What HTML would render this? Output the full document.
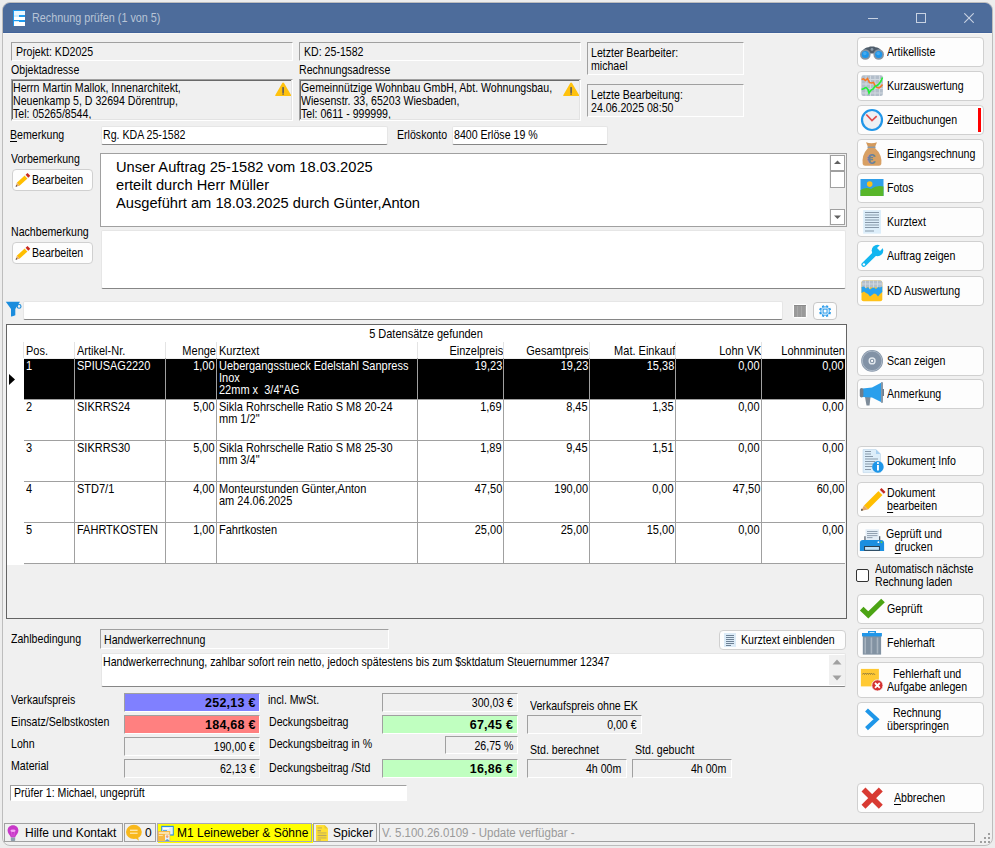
<!DOCTYPE html><html><head><meta charset="utf-8"><style>
html,body{margin:0;padding:0;width:995px;height:848px;overflow:hidden;background:#EDEDED;position:relative;font-family:"Liberation Sans",sans-serif}
u{text-decoration:none;position:relative}u::after{content:'';position:absolute;left:0;right:0;bottom:0.5px;height:1px;background:currentColor}
</style></head><body>
<div style="position:absolute;left:2px;top:2px;width:991px;height:844px;box-sizing:border-box;background:#F0F0F0;border:1px solid #BDBDBD;border-radius:8px;"></div>
<div style="position:absolute;left:3px;top:3px;width:989px;height:30px;box-sizing:border-box;background:#4D6C9B;border-top:1px solid #44659A;border-bottom:1px solid #42639A;border-radius:7px 7px 0 0;"></div>
<div style="position:absolute;left:3px;top:33px;width:989px;height:1px;box-sizing:border-box;background:#F8F7F4;"></div>
<div style="position:absolute;left:32px;transform-origin:0 0;top:11px;font:normal 11.88px/14px 'Liberation Sans';color:#B8C4D6;white-space:pre;transform:scaleX(0.9091);">Rechnung prüfen (1 von 5)</div>
<svg style="position:absolute;left:13px;top:10px" width="12" height="16" viewBox="0 0 12 16"><rect x="0" y="0" width="13" height="17" fill="#1E9BF0"/><rect x="1" y="1" width="11" height="4" fill="#E8F6FF"/><rect x="1" y="5" width="5" height="2" fill="#CFEAFB"/><rect x="1" y="7" width="11" height="3" fill="#FFFFFF"/><rect x="1" y="11" width="5" height="1" fill="#CFEAFB"/><rect x="1" y="12" width="11" height="4" fill="#FFFFFF"/></svg>
<div style="position:absolute;left:868px;top:18px;width:10px;height:1px;box-sizing:border-box;background:#C8D2E2;"></div>
<div style="position:absolute;left:916px;top:13px;width:10px;height:10px;box-sizing:border-box;border:1px solid #C8D2E2;"></div>
<svg style="position:absolute;left:964px;top:13px" width="10" height="10" viewBox="0 0 10 10"><path d="M0.3 0.3L9.7 9.7M9.7 0.3L0.3 9.7" stroke="#C8D2E2" stroke-width="1.1"/></svg>
<div style="position:absolute;left:11px;top:42px;width:282px;height:19px;box-sizing:border-box;background:#F0F0F0;border-style:solid;border-width:1px;border-color:#A0A0A0 #FFFFFF #FFFFFF #A0A0A0;"></div>
<div style="position:absolute;left:16px;transform-origin:0 0;top:45px;font:normal 12.08px/14px 'Liberation Sans';color:#000;white-space:pre;transform:scaleX(0.8772);">Projekt: KD2025</div>
<div style="position:absolute;left:11px;transform-origin:0 0;top:63px;font:normal 12.08px/14px 'Liberation Sans';color:#000;white-space:pre;transform:scaleX(0.8772);">Objektadresse</div>
<div style="position:absolute;left:11px;top:79px;width:282px;height:42px;box-sizing:border-box;background:#F0F0F0;border-style:solid;border-width:1px;border-color:#A0A0A0 #FFFFFF #FFFFFF #A0A0A0;"></div>
<div style="position:absolute;left:12px;top:80px;width:280px;height:40px;box-sizing:border-box;border-style:solid;border-width:1px 0 0 1px;border-color:#696969;"></div>
<div style="position:absolute;left:13px;transform-origin:0 0;top:82px;font:normal 12.08px/13px 'Liberation Sans';color:#000;white-space:pre;transform:scaleX(0.8772);height:38px;overflow:hidden;">Herrn Martin Mallok, Innenarchitekt,
Neuenkamp 5, D 32694 Dörentrup,
Tel: 05265/8544,</div>
<div style="position:absolute;left:299px;top:42px;width:282px;height:19px;box-sizing:border-box;background:#F0F0F0;border-style:solid;border-width:1px;border-color:#A0A0A0 #FFFFFF #FFFFFF #A0A0A0;"></div>
<div style="position:absolute;left:304px;transform-origin:0 0;top:45px;font:normal 12.08px/14px 'Liberation Sans';color:#000;white-space:pre;transform:scaleX(0.8772);">KD: 25-1582</div>
<div style="position:absolute;left:299px;transform-origin:0 0;top:63px;font:normal 12.08px/14px 'Liberation Sans';color:#000;white-space:pre;transform:scaleX(0.8772);">Rechnungsadresse</div>
<div style="position:absolute;left:299px;top:79px;width:282px;height:42px;box-sizing:border-box;background:#F0F0F0;border-style:solid;border-width:1px;border-color:#A0A0A0 #FFFFFF #FFFFFF #A0A0A0;"></div>
<div style="position:absolute;left:300px;top:80px;width:280px;height:40px;box-sizing:border-box;border-style:solid;border-width:1px 0 0 1px;border-color:#696969;"></div>
<div style="position:absolute;left:301px;transform-origin:0 0;top:82px;font:normal 12.08px/13px 'Liberation Sans';color:#000;white-space:pre;transform:scaleX(0.8772);height:38px;overflow:hidden;">Gemeinnützige Wohnbau GmbH, Abt. Wohnungsbau,
Wiesenstr. 33, 65203 Wiesbaden,
Tel: 0611 - 999999,</div>
<svg style="position:absolute;left:275px;top:82px" width="17" height="14" viewBox="0 0 17 14"><path d="M8.1 0.4Q8.6 0.4 9 1L16.2 13.2Q16.4 14 15.6 14H0.7Q-0.1 14 0.2 13.2L7.3 1Q7.6 0.4 8.1 0.4Z" fill="#FFC20E"/><rect x="7.3" y="5" width="1.6" height="6" rx="0.5" fill="#5A5A66"/><rect x="7.3" y="11.4" width="1.6" height="1.3" fill="#5A5A66"/></svg>
<svg style="position:absolute;left:563px;top:82px" width="17" height="14" viewBox="0 0 17 14"><path d="M8.1 0.4Q8.6 0.4 9 1L16.2 13.2Q16.4 14 15.6 14H0.7Q-0.1 14 0.2 13.2L7.3 1Q7.6 0.4 8.1 0.4Z" fill="#FFC20E"/><rect x="7.3" y="5" width="1.6" height="6" rx="0.5" fill="#5A5A66"/><rect x="7.3" y="11.4" width="1.6" height="1.3" fill="#5A5A66"/></svg>
<div style="position:absolute;left:291px;top:80px;width:1px;height:40px;box-sizing:border-box;background:#E3E3E3;"></div>
<div style="position:absolute;left:12px;top:119px;width:280px;height:1px;box-sizing:border-box;background:#E3E3E3;"></div>
<div style="position:absolute;left:579px;top:80px;width:1px;height:40px;box-sizing:border-box;background:#E3E3E3;"></div>
<div style="position:absolute;left:300px;top:119px;width:280px;height:1px;box-sizing:border-box;background:#E3E3E3;"></div>
<div style="position:absolute;left:587px;top:42px;width:157px;height:33px;box-sizing:border-box;background:#F0F0F0;border-style:solid;border-width:1px;border-color:#A0A0A0 #FFFFFF #FFFFFF #A0A0A0;"></div>
<div style="position:absolute;left:591px;transform-origin:0 0;top:47px;font:normal 12.08px/13px 'Liberation Sans';color:#000;white-space:pre;transform:scaleX(0.8772);">Letzter Bearbeiter:
michael</div>
<div style="position:absolute;left:587px;top:84px;width:157px;height:33px;box-sizing:border-box;background:#F0F0F0;border-style:solid;border-width:1px;border-color:#A0A0A0 #FFFFFF #FFFFFF #A0A0A0;"></div>
<div style="position:absolute;left:591px;transform-origin:0 0;top:89px;font:normal 12.08px/13px 'Liberation Sans';color:#000;white-space:pre;transform:scaleX(0.8772);">Letzte Bearbeitung:
24.06.2025 08:50</div>
<div style="position:absolute;left:10px;transform-origin:0 0;top:128px;font:normal 12.08px/14px 'Liberation Sans';color:#000;white-space:pre;transform:scaleX(0.8772);"><u>B</u>emerkung</div>
<div style="position:absolute;left:101px;top:126px;width:287px;height:19px;box-sizing:border-box;background:#FFFFFF;border-style:solid;border-width:1px 1px 1px 1px;border-color:#E6E6E6 #E6E6E6 #868686 #E6E6E6;border-radius:2px;"></div>
<div style="position:absolute;left:103px;transform-origin:0 0;top:128px;font:normal 12.08px/14px 'Liberation Sans';color:#000;white-space:pre;transform:scaleX(0.8772);">Rg. KDA 25-1582</div>
<div style="position:absolute;left:397px;transform-origin:0 0;top:128px;font:normal 12.08px/14px 'Liberation Sans';color:#000;white-space:pre;transform:scaleX(0.8772);">Erlöskonto</div>
<div style="position:absolute;left:452px;top:126px;width:156px;height:19px;box-sizing:border-box;background:#FFFFFF;border-style:solid;border-width:1px 1px 1px 1px;border-color:#E6E6E6 #E6E6E6 #868686 #E6E6E6;border-radius:2px;"></div>
<div style="position:absolute;left:454px;transform-origin:0 0;top:128px;font:normal 12.08px/14px 'Liberation Sans';color:#000;white-space:pre;transform:scaleX(0.8772);">8400 Erlöse 19 %</div>
<div style="position:absolute;left:11px;transform-origin:0 0;top:152px;font:normal 12.08px/14px 'Liberation Sans';color:#000;white-space:pre;transform:scaleX(0.8772);">Vorbemerkung</div>
<div style="position:absolute;left:12px;top:169px;width:81px;height:22px;box-sizing:border-box;background:#FDFDFD;border:1px solid #D0D0D0;border-radius:4px;"></div>
<svg style="position:absolute;left:0;top:0" width="40" height="270"><polygon points="19.51,185.80 27.46,178.47 24.74,175.53 16.79,182.86" fill="#FFBE00"/><polygon points="27.46,178.47 28.33,177.67 25.61,174.73 24.74,175.53" fill="#F4F4F4"/><polygon points="28.33,177.67 30.26,175.87 27.54,172.93 25.61,174.73" fill="#C8281E"/><polygon points="15.80,186.50 19.51,185.80 16.79,182.86" fill="#E3A868"/><polygon points="15.60,186.70 17.30,186.30 16.10,185.00" fill="#333"/></svg>
<div style="position:absolute;left:32px;transform-origin:0 0;top:173px;font:normal 12.08px/14px 'Liberation Sans';color:#000;white-space:pre;transform:scaleX(0.8772);">Bearbeiten</div>
<div style="position:absolute;left:100px;top:153px;width:747px;height:74px;box-sizing:border-box;background:#FFFFFF;border:1px solid #A0A0A0;"></div>
<div style="position:absolute;left:116px;transform-origin:0 0;top:158px;font:normal 15.4px/18px 'Liberation Sans';color:#000;white-space:pre;transform:scaleX(0.9524);">Unser Auftrag 25-1582 vom 18.03.2025
erteilt durch Herr Müller
Ausgeführt am 18.03.2025 durch Günter,Anton</div>
<div style="position:absolute;left:829px;top:154px;width:17px;height:72px;box-sizing:border-box;background:#F0F0F0;"></div>
<div style="position:absolute;left:830px;top:155px;width:15px;height:16px;box-sizing:border-box;background:#fff;border:1px solid #A0A0A0;"></div>
<svg style="position:absolute;left:830px;top:155px" width="15" height="16" viewBox="0 0 15 16"><path d="M4 9L7.5 5.5L11 9Z" fill="#606060"/></svg>
<div style="position:absolute;left:830px;top:171px;width:15px;height:17px;box-sizing:border-box;background:#fff;border:1px solid #A0A0A0;"></div>
<div style="position:absolute;left:830px;top:209px;width:15px;height:16px;box-sizing:border-box;background:#fff;border:1px solid #A0A0A0;"></div>
<svg style="position:absolute;left:830px;top:209px" width="15" height="16" viewBox="0 0 15 16"><path d="M4 6.5L7.5 10L11 6.5Z" fill="#606060"/></svg>
<div style="position:absolute;left:11px;transform-origin:0 0;top:225px;font:normal 12.08px/14px 'Liberation Sans';color:#000;white-space:pre;transform:scaleX(0.8772);">Nachbemerkung</div>
<div style="position:absolute;left:12px;top:242px;width:81px;height:22px;box-sizing:border-box;background:#FDFDFD;border:1px solid #D0D0D0;border-radius:4px;"></div>
<svg style="position:absolute;left:0;top:0" width="40" height="270"><polygon points="19.51,258.80 27.46,251.47 24.74,248.53 16.79,255.86" fill="#FFBE00"/><polygon points="27.46,251.47 28.33,250.67 25.61,247.73 24.74,248.53" fill="#F4F4F4"/><polygon points="28.33,250.67 30.26,248.87 27.54,245.93 25.61,247.73" fill="#C8281E"/><polygon points="15.80,259.50 19.51,258.80 16.79,255.86" fill="#E3A868"/><polygon points="15.60,259.70 17.30,259.30 16.10,258.00" fill="#333"/></svg>
<div style="position:absolute;left:32px;transform-origin:0 0;top:246px;font:normal 12.08px/14px 'Liberation Sans';color:#000;white-space:pre;transform:scaleX(0.8772);">Bearbeiten</div>
<div style="position:absolute;left:101px;top:230px;width:745px;height:59px;box-sizing:border-box;background:#FFFFFF;border-style:solid;border-width:1px 1px 1px 1px;border-color:#E6E6E6 #E6E6E6 #868686 #E6E6E6;border-radius:2px;"></div>
<svg style="position:absolute;left:0;top:0" width="40" height="330"><path d="M5.8 301.8H20L15.3 309V315.3Q13 316.6 11 316.4V309Z" fill="#1A8CDD"/><circle cx="19.1" cy="306.4" r="1.9" fill="none" stroke="#1A8CDD" stroke-width="1.1"/></svg>
<div style="position:absolute;left:23px;top:301px;width:760px;height:19px;box-sizing:border-box;background:#FFFFFF;border-style:solid;border-width:1px 1px 1px 1px;border-color:#E6E6E6 #E6E6E6 #868686 #E6E6E6;border-radius:2px;"></div>
<div style="position:absolute;left:792px;top:303px;width:16px;height:16px;box-sizing:border-box;background:#FFFFFF;border:1px solid #F2F2F2;border-radius:3px;"></div>
<div style="position:absolute;left:794px;top:305px;width:12px;height:12px;box-sizing:border-box;background:repeating-linear-gradient(90deg,#9A9A9A 0 3px,#A8A8A8 3px 4px);border-top:1px solid #8A8A8A;"></div>
<div style="position:absolute;left:813px;top:302px;width:24px;height:18px;box-sizing:border-box;background:#FDFDFD;border:1px solid #C8C8C8;border-radius:4px;"></div>
<svg style="position:absolute;left:813px;top:304px" width="24" height="15"><g transform="translate(12.1,7.1)"><g fill="#2196E8"><rect x="-1.1" y="-6" width="2.2" height="2.2" transform="rotate(22.5)"/><rect x="-1.1" y="-6" width="2.2" height="2.2" transform="rotate(67.5)"/><rect x="-1.1" y="-6" width="2.2" height="2.2" transform="rotate(112.5)"/><rect x="-1.1" y="-6" width="2.2" height="2.2" transform="rotate(157.5)"/><rect x="-1.1" y="-6" width="2.2" height="2.2" transform="rotate(202.5)"/><rect x="-1.1" y="-6" width="2.2" height="2.2" transform="rotate(247.5)"/><rect x="-1.1" y="-6" width="2.2" height="2.2" transform="rotate(292.5)"/><rect x="-1.1" y="-6" width="2.2" height="2.2" transform="rotate(337.5)"/></g><circle r="4.2" fill="#fff" stroke="#5DB3F0" stroke-width="1.1"/><circle r="2.9" fill="none" stroke="#A8D6F7" stroke-width="0.8"/><rect x="-1.9" y="-1.9" width="3.8" height="3.8" fill="#fff" stroke="#2C9BE8" stroke-width="0.9"/></g></svg>
<div style="position:absolute;left:6px;top:324px;width:841px;height:295px;box-sizing:border-box;background:#F0F0F0;border:1px solid #646464;"></div>
<div style="position:absolute;left:7px;top:325px;width:839px;height:33px;box-sizing:border-box;background:#fff;"></div>
<div style="position:absolute;left:7px;top:358px;width:17px;height:207px;box-sizing:border-box;background:#fff;"></div>
<div style="position:absolute;left:326.0px;width:200px;text-align:center;transform-origin:50% 0;top:327px;font:normal 12.1px/15px 'Liberation Sans';color:#000;white-space:pre;transform:scaleX(0.9091);">5 Datensätze gefunden</div>
<div style="position:absolute;left:26px;transform-origin:0 0;top:344px;font:normal 12.1px/15px 'Liberation Sans';color:#000;white-space:pre;transform:scaleX(0.9091);">Pos.</div>
<div style="position:absolute;left:77px;transform-origin:0 0;top:344px;font:normal 12.1px/15px 'Liberation Sans';color:#000;white-space:pre;transform:scaleX(0.9091);">Artikel-Nr.</div>
<div style="position:absolute;right:779px;text-align:right;transform-origin:100% 0;top:344px;font:normal 12.1px/15px 'Liberation Sans';color:#000;white-space:pre;transform:scaleX(0.9091);">Menge</div>
<div style="position:absolute;left:219px;transform-origin:0 0;top:344px;font:normal 12.1px/15px 'Liberation Sans';color:#000;white-space:pre;transform:scaleX(0.9091);">Kurztext</div>
<div style="position:absolute;right:492px;text-align:right;transform-origin:100% 0;top:344px;font:normal 12.1px/15px 'Liberation Sans';color:#000;white-space:pre;transform:scaleX(0.9091);">Einzelpreis</div>
<div style="position:absolute;right:406px;text-align:right;transform-origin:100% 0;top:344px;font:normal 12.1px/15px 'Liberation Sans';color:#000;white-space:pre;transform:scaleX(0.9091);">Gesamtpreis</div>
<div style="position:absolute;right:320px;text-align:right;transform-origin:100% 0;top:344px;font:normal 12.1px/15px 'Liberation Sans';color:#000;white-space:pre;transform:scaleX(0.9091);">Mat. Einkauf</div>
<div style="position:absolute;right:234px;text-align:right;transform-origin:100% 0;top:344px;font:normal 12.1px/15px 'Liberation Sans';color:#000;white-space:pre;transform:scaleX(0.9091);">Lohn VK</div>
<div style="position:absolute;right:150px;text-align:right;transform-origin:100% 0;top:344px;font:normal 12.1px/15px 'Liberation Sans';color:#000;white-space:pre;transform:scaleX(0.9091);">Lohnminuten</div>
<div style="position:absolute;left:23px;top:342px;width:1px;height:16px;box-sizing:border-box;background:#E4E4E4;"></div>
<div style="position:absolute;left:74px;top:342px;width:1px;height:16px;box-sizing:border-box;background:#E4E4E4;"></div>
<div style="position:absolute;left:165px;top:342px;width:1px;height:16px;box-sizing:border-box;background:#E4E4E4;"></div>
<div style="position:absolute;left:216px;top:342px;width:1px;height:16px;box-sizing:border-box;background:#E4E4E4;"></div>
<div style="position:absolute;left:417px;top:342px;width:1px;height:16px;box-sizing:border-box;background:#E4E4E4;"></div>
<div style="position:absolute;left:503px;top:342px;width:1px;height:16px;box-sizing:border-box;background:#E4E4E4;"></div>
<div style="position:absolute;left:589px;top:342px;width:1px;height:16px;box-sizing:border-box;background:#E4E4E4;"></div>
<div style="position:absolute;left:675px;top:342px;width:1px;height:16px;box-sizing:border-box;background:#E4E4E4;"></div>
<div style="position:absolute;left:761px;top:342px;width:1px;height:16px;box-sizing:border-box;background:#E4E4E4;"></div>
<div style="position:absolute;left:24px;top:359px;width:821px;height:40px;box-sizing:border-box;background:#000;"></div>
<div style="position:absolute;left:26px;transform-origin:0 0;top:360px;font:normal 12.1px/12px 'Liberation Sans';color:#fff;white-space:pre;transform:scaleX(0.9091);">1</div>
<div style="position:absolute;left:77px;transform-origin:0 0;top:360px;font:normal 12.1px/12px 'Liberation Sans';color:#fff;white-space:pre;transform:scaleX(0.9091);">SPIUSAG2220</div>
<div style="position:absolute;right:780px;text-align:right;transform-origin:100% 0;top:359px;font:normal 12.1px/15px 'Liberation Sans';color:#fff;white-space:pre;transform:scaleX(0.9091);">1,00</div>
<div style="position:absolute;left:219px;transform-origin:0 0;top:360px;font:normal 12.1px/12px 'Liberation Sans';color:#fff;white-space:pre;transform:scaleX(0.9091);">Uebergangsstueck Edelstahl Sanpress
Inox
22mm x  3/4"AG</div>
<div style="position:absolute;right:493px;text-align:right;transform-origin:100% 0;top:359px;font:normal 12.1px/15px 'Liberation Sans';color:#fff;white-space:pre;transform:scaleX(0.9091);">19,23</div>
<div style="position:absolute;right:407px;text-align:right;transform-origin:100% 0;top:359px;font:normal 12.1px/15px 'Liberation Sans';color:#fff;white-space:pre;transform:scaleX(0.9091);">19,23</div>
<div style="position:absolute;right:321px;text-align:right;transform-origin:100% 0;top:359px;font:normal 12.1px/15px 'Liberation Sans';color:#fff;white-space:pre;transform:scaleX(0.9091);">15,38</div>
<div style="position:absolute;right:235px;text-align:right;transform-origin:100% 0;top:359px;font:normal 12.1px/15px 'Liberation Sans';color:#fff;white-space:pre;transform:scaleX(0.9091);">0,00</div>
<div style="position:absolute;right:151px;text-align:right;transform-origin:100% 0;top:359px;font:normal 12.1px/15px 'Liberation Sans';color:#fff;white-space:pre;transform:scaleX(0.9091);">0,00</div>
<div style="position:absolute;left:24px;top:399px;width:821px;height:1px;box-sizing:border-box;background:#A0A0A0;"></div>
<div style="position:absolute;left:24px;top:400px;width:821px;height:40px;box-sizing:border-box;background:#fff;"></div>
<div style="position:absolute;left:26px;transform-origin:0 0;top:401px;font:normal 12.1px/12px 'Liberation Sans';color:#000;white-space:pre;transform:scaleX(0.9091);">2</div>
<div style="position:absolute;left:77px;transform-origin:0 0;top:401px;font:normal 12.1px/12px 'Liberation Sans';color:#000;white-space:pre;transform:scaleX(0.9091);">SIKRRS24</div>
<div style="position:absolute;right:780px;text-align:right;transform-origin:100% 0;top:400px;font:normal 12.1px/15px 'Liberation Sans';color:#000;white-space:pre;transform:scaleX(0.9091);">5,00</div>
<div style="position:absolute;left:219px;transform-origin:0 0;top:401px;font:normal 12.1px/12px 'Liberation Sans';color:#000;white-space:pre;transform:scaleX(0.9091);">Sikla Rohrschelle Ratio S M8 20-24
mm 1/2"</div>
<div style="position:absolute;right:493px;text-align:right;transform-origin:100% 0;top:400px;font:normal 12.1px/15px 'Liberation Sans';color:#000;white-space:pre;transform:scaleX(0.9091);">1,69</div>
<div style="position:absolute;right:407px;text-align:right;transform-origin:100% 0;top:400px;font:normal 12.1px/15px 'Liberation Sans';color:#000;white-space:pre;transform:scaleX(0.9091);">8,45</div>
<div style="position:absolute;right:321px;text-align:right;transform-origin:100% 0;top:400px;font:normal 12.1px/15px 'Liberation Sans';color:#000;white-space:pre;transform:scaleX(0.9091);">1,35</div>
<div style="position:absolute;right:235px;text-align:right;transform-origin:100% 0;top:400px;font:normal 12.1px/15px 'Liberation Sans';color:#000;white-space:pre;transform:scaleX(0.9091);">0,00</div>
<div style="position:absolute;right:151px;text-align:right;transform-origin:100% 0;top:400px;font:normal 12.1px/15px 'Liberation Sans';color:#000;white-space:pre;transform:scaleX(0.9091);">0,00</div>
<div style="position:absolute;left:24px;top:440px;width:821px;height:1px;box-sizing:border-box;background:#A0A0A0;"></div>
<div style="position:absolute;left:24px;top:441px;width:821px;height:40px;box-sizing:border-box;background:#fff;"></div>
<div style="position:absolute;left:26px;transform-origin:0 0;top:442px;font:normal 12.1px/12px 'Liberation Sans';color:#000;white-space:pre;transform:scaleX(0.9091);">3</div>
<div style="position:absolute;left:77px;transform-origin:0 0;top:442px;font:normal 12.1px/12px 'Liberation Sans';color:#000;white-space:pre;transform:scaleX(0.9091);">SIKRRS30</div>
<div style="position:absolute;right:780px;text-align:right;transform-origin:100% 0;top:441px;font:normal 12.1px/15px 'Liberation Sans';color:#000;white-space:pre;transform:scaleX(0.9091);">5,00</div>
<div style="position:absolute;left:219px;transform-origin:0 0;top:442px;font:normal 12.1px/12px 'Liberation Sans';color:#000;white-space:pre;transform:scaleX(0.9091);">Sikla Rohrschelle Ratio S M8 25-30
mm 3/4"</div>
<div style="position:absolute;right:493px;text-align:right;transform-origin:100% 0;top:441px;font:normal 12.1px/15px 'Liberation Sans';color:#000;white-space:pre;transform:scaleX(0.9091);">1,89</div>
<div style="position:absolute;right:407px;text-align:right;transform-origin:100% 0;top:441px;font:normal 12.1px/15px 'Liberation Sans';color:#000;white-space:pre;transform:scaleX(0.9091);">9,45</div>
<div style="position:absolute;right:321px;text-align:right;transform-origin:100% 0;top:441px;font:normal 12.1px/15px 'Liberation Sans';color:#000;white-space:pre;transform:scaleX(0.9091);">1,51</div>
<div style="position:absolute;right:235px;text-align:right;transform-origin:100% 0;top:441px;font:normal 12.1px/15px 'Liberation Sans';color:#000;white-space:pre;transform:scaleX(0.9091);">0,00</div>
<div style="position:absolute;right:151px;text-align:right;transform-origin:100% 0;top:441px;font:normal 12.1px/15px 'Liberation Sans';color:#000;white-space:pre;transform:scaleX(0.9091);">0,00</div>
<div style="position:absolute;left:24px;top:481px;width:821px;height:1px;box-sizing:border-box;background:#A0A0A0;"></div>
<div style="position:absolute;left:24px;top:482px;width:821px;height:40px;box-sizing:border-box;background:#fff;"></div>
<div style="position:absolute;left:26px;transform-origin:0 0;top:483px;font:normal 12.1px/12px 'Liberation Sans';color:#000;white-space:pre;transform:scaleX(0.9091);">4</div>
<div style="position:absolute;left:77px;transform-origin:0 0;top:483px;font:normal 12.1px/12px 'Liberation Sans';color:#000;white-space:pre;transform:scaleX(0.9091);">STD7/1</div>
<div style="position:absolute;right:780px;text-align:right;transform-origin:100% 0;top:482px;font:normal 12.1px/15px 'Liberation Sans';color:#000;white-space:pre;transform:scaleX(0.9091);">4,00</div>
<div style="position:absolute;left:219px;transform-origin:0 0;top:483px;font:normal 12.1px/12px 'Liberation Sans';color:#000;white-space:pre;transform:scaleX(0.9091);">Monteurstunden Günter,Anton
am 24.06.2025</div>
<div style="position:absolute;right:493px;text-align:right;transform-origin:100% 0;top:482px;font:normal 12.1px/15px 'Liberation Sans';color:#000;white-space:pre;transform:scaleX(0.9091);">47,50</div>
<div style="position:absolute;right:407px;text-align:right;transform-origin:100% 0;top:482px;font:normal 12.1px/15px 'Liberation Sans';color:#000;white-space:pre;transform:scaleX(0.9091);">190,00</div>
<div style="position:absolute;right:321px;text-align:right;transform-origin:100% 0;top:482px;font:normal 12.1px/15px 'Liberation Sans';color:#000;white-space:pre;transform:scaleX(0.9091);">0,00</div>
<div style="position:absolute;right:235px;text-align:right;transform-origin:100% 0;top:482px;font:normal 12.1px/15px 'Liberation Sans';color:#000;white-space:pre;transform:scaleX(0.9091);">47,50</div>
<div style="position:absolute;right:151px;text-align:right;transform-origin:100% 0;top:482px;font:normal 12.1px/15px 'Liberation Sans';color:#000;white-space:pre;transform:scaleX(0.9091);">60,00</div>
<div style="position:absolute;left:24px;top:522px;width:821px;height:1px;box-sizing:border-box;background:#A0A0A0;"></div>
<div style="position:absolute;left:24px;top:523px;width:821px;height:40px;box-sizing:border-box;background:#fff;"></div>
<div style="position:absolute;left:26px;transform-origin:0 0;top:524px;font:normal 12.1px/12px 'Liberation Sans';color:#000;white-space:pre;transform:scaleX(0.9091);">5</div>
<div style="position:absolute;left:77px;transform-origin:0 0;top:524px;font:normal 12.1px/12px 'Liberation Sans';color:#000;white-space:pre;transform:scaleX(0.9091);">FAHRTKOSTEN</div>
<div style="position:absolute;right:780px;text-align:right;transform-origin:100% 0;top:523px;font:normal 12.1px/15px 'Liberation Sans';color:#000;white-space:pre;transform:scaleX(0.9091);">1,00</div>
<div style="position:absolute;left:219px;transform-origin:0 0;top:524px;font:normal 12.1px/12px 'Liberation Sans';color:#000;white-space:pre;transform:scaleX(0.9091);">Fahrtkosten</div>
<div style="position:absolute;right:493px;text-align:right;transform-origin:100% 0;top:523px;font:normal 12.1px/15px 'Liberation Sans';color:#000;white-space:pre;transform:scaleX(0.9091);">25,00</div>
<div style="position:absolute;right:407px;text-align:right;transform-origin:100% 0;top:523px;font:normal 12.1px/15px 'Liberation Sans';color:#000;white-space:pre;transform:scaleX(0.9091);">25,00</div>
<div style="position:absolute;right:321px;text-align:right;transform-origin:100% 0;top:523px;font:normal 12.1px/15px 'Liberation Sans';color:#000;white-space:pre;transform:scaleX(0.9091);">15,00</div>
<div style="position:absolute;right:235px;text-align:right;transform-origin:100% 0;top:523px;font:normal 12.1px/15px 'Liberation Sans';color:#000;white-space:pre;transform:scaleX(0.9091);">0,00</div>
<div style="position:absolute;right:151px;text-align:right;transform-origin:100% 0;top:523px;font:normal 12.1px/15px 'Liberation Sans';color:#000;white-space:pre;transform:scaleX(0.9091);">0,00</div>
<div style="position:absolute;left:24px;top:563px;width:821px;height:1px;box-sizing:border-box;background:#A0A0A0;"></div>
<div style="position:absolute;left:74px;top:358px;width:1px;height:206px;box-sizing:border-box;background:#A0A0A0;"></div>
<div style="position:absolute;left:165px;top:358px;width:1px;height:206px;box-sizing:border-box;background:#A0A0A0;"></div>
<div style="position:absolute;left:216px;top:358px;width:1px;height:206px;box-sizing:border-box;background:#A0A0A0;"></div>
<div style="position:absolute;left:417px;top:358px;width:1px;height:206px;box-sizing:border-box;background:#A0A0A0;"></div>
<div style="position:absolute;left:503px;top:358px;width:1px;height:206px;box-sizing:border-box;background:#A0A0A0;"></div>
<div style="position:absolute;left:589px;top:358px;width:1px;height:206px;box-sizing:border-box;background:#A0A0A0;"></div>
<div style="position:absolute;left:675px;top:358px;width:1px;height:206px;box-sizing:border-box;background:#A0A0A0;"></div>
<div style="position:absolute;left:761px;top:358px;width:1px;height:206px;box-sizing:border-box;background:#A0A0A0;"></div>
<svg style="position:absolute;left:9px;top:374px" width="6" height="11" viewBox="0 0 6 11"><path d="M0 0L6 5.5L0 11Z" fill="#000"/></svg>
<div style="position:absolute;left:11px;transform-origin:0 0;top:632px;font:normal 12.08px/14px 'Liberation Sans';color:#000;white-space:pre;transform:scaleX(0.8772);">Zahlbedingung</div>
<div style="position:absolute;left:100px;top:629px;width:289px;height:20px;box-sizing:border-box;background:#F0F0F0;border-style:solid;border-width:1px;border-color:#A0A0A0 #FFFFFF #FFFFFF #A0A0A0;"></div>
<div style="position:absolute;left:104px;transform-origin:0 0;top:633px;font:normal 12.08px/14px 'Liberation Sans';color:#000;white-space:pre;transform:scaleX(0.8772);">Handwerkerrechnung</div>
<div style="position:absolute;left:719px;top:630px;width:127px;height:20px;box-sizing:border-box;background:#FDFDFD;border:1px solid #D0D0D0;border-radius:4px;"></div>
<svg style="position:absolute;left:724px;top:633px" width="12" height="14" viewBox="0 0 12 14"><rect x="0" y="0" width="12" height="14" fill="#DCEBF7"/><g fill="#6E8296"><rect x="2" y="2" width="8" height="1"/><rect x="2" y="4" width="8" height="1"/><rect x="2" y="6" width="8" height="1"/><rect x="2" y="8" width="8" height="1"/><rect x="2" y="10" width="8" height="1"/><rect x="2" y="12" width="5" height="1"/></g></svg>
<div style="position:absolute;left:741px;transform-origin:0 0;top:633px;font:normal 12.08px/14px 'Liberation Sans';color:#000;white-space:pre;transform:scaleX(0.8772);">Kurztext einblenden</div>
<div style="position:absolute;left:101px;top:653px;width:745px;height:34px;box-sizing:border-box;background:#FFFFFF;border-style:solid;border-width:1px 1px 1px 1px;border-color:#E6E6E6 #E6E6E6 #868686 #E6E6E6;border-radius:2px;"></div>
<div style="position:absolute;left:103px;transform-origin:0 0;top:655px;font:normal 12.08px/14px 'Liberation Sans';color:#000;white-space:pre;transform:scaleX(0.8772);">Handwerkerrechnung, zahlbar sofort rein netto, jedoch spätestens bis zum $sktdatum Steuernummer 12347</div>
<div style="position:absolute;left:829px;top:655px;width:16px;height:30px;box-sizing:border-box;background:#F0F0F0;"></div>
<svg style="position:absolute;left:829px;top:656px" width="16" height="12" viewBox="0 0 16 12"><path d="M3.5 8.5L8 3.5L12.5 8.5Z" fill="#A0A0A0"/></svg>
<svg style="position:absolute;left:829px;top:672px" width="16" height="12" viewBox="0 0 16 12"><path d="M3.5 3.5L8 8.5L12.5 3.5Z" fill="#A0A0A0"/></svg>
<div style="position:absolute;left:11px;transform-origin:0 0;top:693px;font:normal 12.08px/14px 'Liberation Sans';color:#000;white-space:pre;transform:scaleX(0.8772);">Verkaufspreis</div>
<div style="position:absolute;left:11px;transform-origin:0 0;top:715px;font:normal 12.08px/14px 'Liberation Sans';color:#000;white-space:pre;transform:scaleX(0.8772);">Einsatz/Selbstkosten</div>
<div style="position:absolute;left:11px;transform-origin:0 0;top:737px;font:normal 12.08px/14px 'Liberation Sans';color:#000;white-space:pre;transform:scaleX(0.8772);">Lohn</div>
<div style="position:absolute;left:11px;transform-origin:0 0;top:759px;font:normal 12.08px/14px 'Liberation Sans';color:#000;white-space:pre;transform:scaleX(0.8772);">Material</div>
<div style="position:absolute;left:124px;top:693px;width:136px;height:19px;box-sizing:border-box;background:#8080FF;border-style:solid;border-width:1px;border-color:#A0A0A0 #fff #fff #A0A0A0;"></div>
<div style="position:absolute;right:739px;text-align:right;transform-origin:100% 0;top:695px;font:bold 13.0px/16px 'Liberation Sans';color:#000;white-space:pre;transform:scaleX(0.9615);letter-spacing:0.25px;">252,13 €</div>
<div style="position:absolute;left:124px;top:715px;width:136px;height:19px;box-sizing:border-box;background:#FF8080;border-style:solid;border-width:1px;border-color:#A0A0A0 #fff #fff #A0A0A0;"></div>
<div style="position:absolute;right:739px;text-align:right;transform-origin:100% 0;top:717px;font:bold 13.0px/16px 'Liberation Sans';color:#000;white-space:pre;transform:scaleX(0.9615);letter-spacing:0.25px;">184,68 €</div>
<div style="position:absolute;left:124px;top:737px;width:136px;height:19px;box-sizing:border-box;background:#F0F0F0;border-style:solid;border-width:1px;border-color:#A0A0A0 #FFFFFF #FFFFFF #A0A0A0;"></div>
<div style="position:absolute;right:740px;text-align:right;transform-origin:100% 0;top:740px;font:normal 12.08px/14px 'Liberation Sans';color:#000;white-space:pre;transform:scaleX(0.8772);">190,00 €</div>
<div style="position:absolute;left:124px;top:759px;width:136px;height:19px;box-sizing:border-box;background:#F0F0F0;border-style:solid;border-width:1px;border-color:#A0A0A0 #FFFFFF #FFFFFF #A0A0A0;"></div>
<div style="position:absolute;right:740px;text-align:right;transform-origin:100% 0;top:762px;font:normal 12.08px/14px 'Liberation Sans';color:#000;white-space:pre;transform:scaleX(0.8772);">62,13 €</div>
<div style="position:absolute;left:268px;transform-origin:0 0;top:693px;font:normal 12.08px/14px 'Liberation Sans';color:#000;white-space:pre;transform:scaleX(0.8772);">incl. MwSt.</div>
<div style="position:absolute;left:269px;transform-origin:0 0;top:715px;font:normal 12.08px/14px 'Liberation Sans';color:#000;white-space:pre;transform:scaleX(0.8772);">Deckungsbeitrag</div>
<div style="position:absolute;left:269px;transform-origin:0 0;top:737px;font:normal 12.08px/14px 'Liberation Sans';color:#000;white-space:pre;transform:scaleX(0.8772);">Deckungsbeitrag in %</div>
<div style="position:absolute;left:269px;transform-origin:0 0;top:761px;font:normal 12.08px/14px 'Liberation Sans';color:#000;white-space:pre;transform:scaleX(0.8772);">Deckungsbeitrag /Std</div>
<div style="position:absolute;left:382px;top:693px;width:136px;height:19px;box-sizing:border-box;background:#F0F0F0;border-style:solid;border-width:1px;border-color:#A0A0A0 #FFFFFF #FFFFFF #A0A0A0;"></div>
<div style="position:absolute;right:482px;text-align:right;transform-origin:100% 0;top:696px;font:normal 12.08px/14px 'Liberation Sans';color:#000;white-space:pre;transform:scaleX(0.8772);">300,03 €</div>
<div style="position:absolute;left:382px;top:715px;width:136px;height:19px;box-sizing:border-box;background:#C0FFC0;border-style:solid;border-width:1px;border-color:#A0A0A0 #fff #fff #A0A0A0;"></div>
<div style="position:absolute;right:482px;text-align:right;transform-origin:100% 0;top:717px;font:bold 13.0px/16px 'Liberation Sans';color:#000;white-space:pre;transform:scaleX(0.9615);letter-spacing:0.25px;">67,45 €</div>
<div style="position:absolute;left:445px;top:736px;width:73px;height:18px;box-sizing:border-box;background:#F0F0F0;border-style:solid;border-width:1px;border-color:#A0A0A0 #FFFFFF #FFFFFF #A0A0A0;"></div>
<div style="position:absolute;right:482px;text-align:right;transform-origin:100% 0;top:739px;font:normal 12.08px/14px 'Liberation Sans';color:#000;white-space:pre;transform:scaleX(0.8772);">26,75 %</div>
<div style="position:absolute;left:382px;top:759px;width:136px;height:19px;box-sizing:border-box;background:#C0FFC0;border-style:solid;border-width:1px;border-color:#A0A0A0 #fff #fff #A0A0A0;"></div>
<div style="position:absolute;right:482px;text-align:right;transform-origin:100% 0;top:761px;font:bold 13.0px/16px 'Liberation Sans';color:#000;white-space:pre;transform:scaleX(0.9615);letter-spacing:0.25px;">16,86 €</div>
<div style="position:absolute;left:530px;transform-origin:0 0;top:699px;font:normal 12.08px/14px 'Liberation Sans';color:#000;white-space:pre;transform:scaleX(0.8772);">Verkaufspreis ohne EK</div>
<div style="position:absolute;left:527px;top:715px;width:115px;height:19px;box-sizing:border-box;background:#F0F0F0;border-style:solid;border-width:1px;border-color:#A0A0A0 #FFFFFF #FFFFFF #A0A0A0;"></div>
<div style="position:absolute;right:358px;text-align:right;transform-origin:100% 0;top:718px;font:normal 12.08px/14px 'Liberation Sans';color:#000;white-space:pre;transform:scaleX(0.8772);">0,00 €</div>
<div style="position:absolute;left:530px;transform-origin:0 0;top:743px;font:normal 12.08px/14px 'Liberation Sans';color:#000;white-space:pre;transform:scaleX(0.8772);">Std. berechnet</div>
<div style="position:absolute;left:635px;transform-origin:0 0;top:743px;font:normal 12.08px/14px 'Liberation Sans';color:#000;white-space:pre;transform:scaleX(0.8772);">Std. gebucht</div>
<div style="position:absolute;left:527px;top:759px;width:100px;height:19px;box-sizing:border-box;background:#F0F0F0;border-style:solid;border-width:1px;border-color:#A0A0A0 #FFFFFF #FFFFFF #A0A0A0;"></div>
<div style="position:absolute;right:374px;text-align:right;transform-origin:100% 0;top:762px;font:normal 12.08px/14px 'Liberation Sans';color:#000;white-space:pre;transform:scaleX(0.8772);">4h 00m</div>
<div style="position:absolute;left:632px;top:759px;width:100px;height:19px;box-sizing:border-box;background:#F0F0F0;border-style:solid;border-width:1px;border-color:#A0A0A0 #FFFFFF #FFFFFF #A0A0A0;"></div>
<div style="position:absolute;right:269px;text-align:right;transform-origin:100% 0;top:762px;font:normal 12.08px/14px 'Liberation Sans';color:#000;white-space:pre;transform:scaleX(0.8772);">4h 00m</div>
<div style="position:absolute;left:10px;top:785px;width:397px;height:16px;box-sizing:border-box;background:#fff;border-style:solid;border-width:1px;border-color:#A0A0A0 #fff #fff #A0A0A0;"></div>
<div style="position:absolute;left:14px;transform-origin:0 0;top:786px;font:normal 12.08px/14px 'Liberation Sans';color:#000;white-space:pre;transform:scaleX(0.8772);">Prüfer 1: Michael, ungeprüft</div>
<div style="position:absolute;left:857px;top:37px;width:127px;height:30px;box-sizing:border-box;background:#FDFDFD;border:1px solid #D0D0D0;border-radius:4px;"></div>
<div style="position:absolute;left:887px;transform-origin:0 0;top:46px;font:normal 12.08px/13px 'Liberation Sans';color:#000;white-space:pre;transform:scaleX(0.8772);">Artikelliste</div>
<div style="position:absolute;left:857px;top:71px;width:127px;height:30px;box-sizing:border-box;background:#FDFDFD;border:1px solid #D0D0D0;border-radius:4px;"></div>
<div style="position:absolute;left:887px;transform-origin:0 0;top:80px;font:normal 12.08px/13px 'Liberation Sans';color:#000;white-space:pre;transform:scaleX(0.8772);">Kurzauswertung</div>
<div style="position:absolute;left:857px;top:105px;width:127px;height:30px;box-sizing:border-box;background:#FDFDFD;border:1px solid #D0D0D0;border-radius:4px;"></div>
<div style="position:absolute;left:887px;transform-origin:0 0;top:114px;font:normal 12.08px/13px 'Liberation Sans';color:#000;white-space:pre;transform:scaleX(0.8772);">Zeitbuchungen</div>
<div style="position:absolute;left:978px;top:108px;width:3px;height:24px;box-sizing:border-box;background:#FF0000;"></div>
<div style="position:absolute;left:857px;top:139px;width:127px;height:30px;box-sizing:border-box;background:#FDFDFD;border:1px solid #D0D0D0;border-radius:4px;"></div>
<div style="position:absolute;left:887px;transform-origin:0 0;top:148px;font:normal 12.08px/13px 'Liberation Sans';color:#000;white-space:pre;transform:scaleX(0.8772);">Eingangs<u>r</u>echnung</div>
<div style="position:absolute;left:857px;top:173px;width:127px;height:30px;box-sizing:border-box;background:#FDFDFD;border:1px solid #D0D0D0;border-radius:4px;"></div>
<div style="position:absolute;left:887px;transform-origin:0 0;top:182px;font:normal 12.08px/13px 'Liberation Sans';color:#000;white-space:pre;transform:scaleX(0.8772);">Fotos</div>
<div style="position:absolute;left:857px;top:207px;width:127px;height:30px;box-sizing:border-box;background:#FDFDFD;border:1px solid #D0D0D0;border-radius:4px;"></div>
<div style="position:absolute;left:887px;transform-origin:0 0;top:216px;font:normal 12.08px/13px 'Liberation Sans';color:#000;white-space:pre;transform:scaleX(0.8772);">Kurztext</div>
<div style="position:absolute;left:857px;top:241px;width:127px;height:30px;box-sizing:border-box;background:#FDFDFD;border:1px solid #D0D0D0;border-radius:4px;"></div>
<div style="position:absolute;left:887px;transform-origin:0 0;top:250px;font:normal 12.08px/13px 'Liberation Sans';color:#000;white-space:pre;transform:scaleX(0.8772);">Auftrag zeigen</div>
<div style="position:absolute;left:857px;top:276px;width:127px;height:30px;box-sizing:border-box;background:#FDFDFD;border:1px solid #D0D0D0;border-radius:4px;"></div>
<div style="position:absolute;left:887px;transform-origin:0 0;top:285px;font:normal 12.08px/13px 'Liberation Sans';color:#000;white-space:pre;transform:scaleX(0.8772);">KD Auswertung</div>
<div style="position:absolute;left:857px;top:346px;width:127px;height:30px;box-sizing:border-box;background:#FDFDFD;border:1px solid #D0D0D0;border-radius:4px;"></div>
<div style="position:absolute;left:887px;transform-origin:0 0;top:355px;font:normal 12.08px/13px 'Liberation Sans';color:#000;white-space:pre;transform:scaleX(0.8772);">Scan zeigen</div>
<div style="position:absolute;left:857px;top:379px;width:127px;height:30px;box-sizing:border-box;background:#FDFDFD;border:1px solid #D0D0D0;border-radius:4px;"></div>
<div style="position:absolute;left:887px;transform-origin:0 0;top:388px;font:normal 12.08px/13px 'Liberation Sans';color:#000;white-space:pre;transform:scaleX(0.8772);">Anmer<u>k</u>ung</div>
<div style="position:absolute;left:857px;top:446px;width:127px;height:30px;box-sizing:border-box;background:#FDFDFD;border:1px solid #D0D0D0;border-radius:4px;"></div>
<div style="position:absolute;left:887px;transform-origin:0 0;top:455px;font:normal 12.08px/13px 'Liberation Sans';color:#000;white-space:pre;transform:scaleX(0.8772);">Dokumen<u>t</u> Info</div>
<div style="position:absolute;left:857px;top:482px;width:127px;height:35px;box-sizing:border-box;background:#FDFDFD;border:1px solid #D0D0D0;border-radius:4px;"></div>
<div style="position:absolute;left:887px;transform-origin:0 0;top:487px;font:normal 12.08px/13px 'Liberation Sans';color:#000;white-space:pre;transform:scaleX(0.8772);">Dokument
<u>b</u>earbeiten</div>
<div style="position:absolute;left:857px;top:522px;width:127px;height:36px;box-sizing:border-box;background:#FDFDFD;border:1px solid #D0D0D0;border-radius:4px;"></div>
<div style="position:absolute;left:886px;transform-origin:0 0;top:528px;font:normal 12.08px/13px 'Liberation Sans';color:#000;white-space:pre;transform:scaleX(0.8772);">Geprüft und
   <u>d</u>rucken</div>
<div style="position:absolute;left:856px;top:569px;width:13px;height:13px;box-sizing:border-box;background:#fff;border:1px solid #333;border-radius:2px;"></div>
<div style="position:absolute;left:875px;transform-origin:0 0;top:563px;font:normal 12.08px/13px 'Liberation Sans';color:#000;white-space:pre;transform:scaleX(0.8772);">Automatisch nächste
Rechnung laden</div>
<div style="position:absolute;left:857px;top:594px;width:127px;height:30px;box-sizing:border-box;background:#FDFDFD;border:1px solid #D0D0D0;border-radius:4px;"></div>
<div style="position:absolute;left:887px;transform-origin:0 0;top:603px;font:normal 12.08px/13px 'Liberation Sans';color:#000;white-space:pre;transform:scaleX(0.8772);">Geprüft</div>
<div style="position:absolute;left:857px;top:628px;width:127px;height:30px;box-sizing:border-box;background:#FDFDFD;border:1px solid #D0D0D0;border-radius:4px;"></div>
<div style="position:absolute;left:887px;transform-origin:0 0;top:637px;font:normal 12.08px/13px 'Liberation Sans';color:#000;white-space:pre;transform:scaleX(0.8772);">Fehlerhaft</div>
<div style="position:absolute;left:857px;top:662px;width:127px;height:36px;box-sizing:border-box;background:#FDFDFD;border:1px solid #D0D0D0;border-radius:4px;"></div>
<div style="position:absolute;left:887px;transform-origin:0 0;top:668px;font:normal 12.08px/13px 'Liberation Sans';color:#000;white-space:pre;transform:scaleX(0.8772);">  Fehlerhaft und
Aufgabe anlegen</div>
<div style="position:absolute;left:857px;top:702px;width:127px;height:35px;box-sizing:border-box;background:#FDFDFD;border:1px solid #D0D0D0;border-radius:4px;"></div>
<div style="position:absolute;left:887px;transform-origin:0 0;top:707px;font:normal 12.08px/13px 'Liberation Sans';color:#000;white-space:pre;transform:scaleX(0.8772);">  Rechnung
überspringen</div>
<div style="position:absolute;left:857px;top:783px;width:127px;height:30px;box-sizing:border-box;background:#FDFDFD;border:1px solid #D0D0D0;border-radius:4px;"></div>
<div style="position:absolute;left:894px;transform-origin:0 0;top:792px;font:normal 12.08px/13px 'Liberation Sans';color:#000;white-space:pre;transform:scaleX(0.8772);"><u>A</u>bbrechen</div>
<svg style="position:absolute;left:0;top:0" width="995" height="848" viewBox="0 0 995 848"><path d="M862 51.5Q865 47.3 868.5 47.3L870 46.6H874L875.5 47.3Q879 47.3 882 51.5L877.5 53.6H866.5Z" fill="#4E5C6A"/><circle cx="865.3" cy="54.5" r="5.3" fill="#8494A4"/><circle cx="878.7" cy="54.5" r="5.3" fill="#8494A4"/><circle cx="865.3" cy="54.5" r="3.6" fill="#1E96EA"/><circle cx="878.7" cy="54.5" r="3.6" fill="#1E96EA"/><circle cx="864.8" cy="53.5" r="1.8" fill="#5CB8F5" opacity="0.6"/><circle cx="878.2" cy="53.5" r="1.8" fill="#5CB8F5" opacity="0.6"/><circle cx="872" cy="49.4" r="1.4" fill="#8A9AAA"/><rect x="861.4" y="75.3" width="21.5" height="20.8" rx="2" fill="#B3BECA"/><g stroke="#D2D9E0" stroke-width="1"><path d="M866 75.3V96M870.5 75.3V96M875 75.3V96M879.5 75.3V96M861.4 79.5H883M861.4 84H883M861.4 88.5H883M861.4 93H883"/></g><path d="M861.5 79.5L863.5 78.8L865.5 80.5L867.5 78.5L869.5 82.5L871.5 83L873.5 82.5L875 85.5L877 87.5L879 88L881 86.5L882.5 84.5" fill="none" stroke="#F57A26" stroke-width="1.6"/><path d="M861.5 89.5L864 88.5L866 87.5L868 89.5L869 93L871 90L873 89L875 86.5L877 85.5L879 84L881 81L882.5 77.5" fill="none" stroke="#22EE3A" stroke-width="1.6"/><circle cx="872" cy="120" r="10" fill="#EEF0F4" stroke="#2196E8" stroke-width="2.2"/><path d="M866.3 114.5L872 120.6L876.7 116.2" fill="none" stroke="#E04A4A" stroke-width="1.7"/><path d="M866 142.3Q871.5 144 877 142.3L875 147H868Z" fill="#D49A5C"/><rect x="867.5" y="146.5" width="8" height="1.6" fill="#8C9AA8"/><path d="M868 148H875Q882.5 155 881.3 164Q881 165.8 879 165.8H865Q863 165.8 862.7 164Q861.5 155 868 148Z" fill="#D8A064"/><text x="871.3" y="164" font-family="Liberation Sans" font-size="15.5" font-weight="bold" fill="#6A82A0" text-anchor="middle">€</text><rect x="860.5" y="179" width="23" height="17" fill="#2E9FEA"/><circle cx="869.7" cy="184.1" r="2.8" fill="#F8BE1E"/><path d="M860.5 190Q866 186.5 871 189Q877 184.5 883.5 186.5V196H860.5Z" fill="#58B62A"/><rect x="863.2" y="210.1" width="17.8" height="23.6" fill="#DDEEFA"/><g fill="#8899AA"><rect x="865" y="212" width="14" height="1"/><rect x="865" y="214.5" width="14" height="1"/><rect x="865" y="217" width="14" height="1"/><rect x="865" y="219.5" width="14" height="1"/><rect x="865" y="222" width="14" height="1"/><rect x="865" y="224.5" width="14" height="1"/><rect x="865" y="227" width="14" height="1"/><rect x="865" y="230.5" width="9" height="1"/></g><path d="M863.7 264.6L876 252.5" stroke="#12B6F0" stroke-width="4.6" stroke-linecap="round"/><circle cx="877.5" cy="250.5" r="5.8" fill="#12B6F0"/><path d="M878.5 249.5L884.5 243.5" stroke="#FDFDFD" stroke-width="4.2"/><circle cx="863.9" cy="264.4" r="1.2" fill="#fff"/><rect x="861.5" y="280.5" width="20.8" height="20.7" rx="2" fill="#FFC21A"/><path d="M861.5 282.5Q861.5 280.5 863.5 280.5H880.3Q882.3 280.5 882.3 282.5V287.5H861.5Z" fill="#B5BFC9"/><g stroke="#D5DCE3" stroke-width="0.8"><path d="M865.5 280.5V292M869.5 280.5V292M873.5 280.5V292M877.5 280.5V292M861.5 284H882.3"/></g><path d="M861.5 287L864 286.5L866 288.5L868 287L870 289.5L872 288L874 287.5L876 289L878 287L880 287.5L882.3 286.5V292L880 294L878 296.5L876 294L874 293.5L872 295L870 296.5L868 294L866 293L864 291.5L861.5 293Z" fill="#27A2EF"/><circle cx="872.1" cy="360.9" r="10.9" fill="#8292A6"/><circle cx="872.1" cy="360.9" r="9.8" fill="none" stroke="#C8D2DC" stroke-width="0.6"/><circle cx="872.1" cy="360.9" r="3.6" fill="#E2E8EE"/><circle cx="872.1" cy="360.9" r="2.2" fill="#8292A6"/><circle cx="872.1" cy="360.9" r="1.1" fill="#fff"/><path d="M865 397L870.5 397L869.5 405.5L866.5 405.5Z" fill="#7D8B99"/><path d="M862.5 388.5L872 387.5L882 382.3V402.5L872 397.5L862.5 397Z" fill="#2A9FEC"/><rect x="859.8" y="388" width="3.6" height="9.6" rx="1.8" fill="#6F7D8B"/><rect x="881" y="382" width="2" height="21" rx="1" fill="#8A98A6"/><rect x="882.5" y="389" width="1.5" height="7" fill="#6F7D8B"/><path d="M863.1 449.5H876L880.5 454V472.6H863.1Z" fill="#DDEEFA" stroke="#B8D4EA" stroke-width="0.6"/><path d="M876 449.5V454H880.5Z" fill="#A8D0F0"/><g fill="#8899AA"><rect x="865" y="451" width="6" height="1"/><rect x="865" y="453.5" width="6" height="1"/><rect x="865" y="456" width="8" height="1"/><rect x="865" y="458.5" width="13" height="1"/><rect x="865" y="461" width="10" height="1"/><rect x="865" y="463.5" width="8" height="1"/><rect x="865" y="466" width="7" height="1"/><rect x="865" y="469" width="6" height="1"/></g><circle cx="877.9" cy="466.9" r="5.8" fill="#1E96E8"/><rect x="877" y="465" width="1.9" height="5.5" fill="#fff"/><rect x="877" y="462.2" width="1.9" height="1.7" fill="#fff"/><path d="M864 505.5L878.5 491L882.5 495L868 509.5Z" fill="#FFBE00"/><path d="M878.5 491L879.8 489.7L883.8 493.7L882.5 495Z" fill="#F2F2F2"/><path d="M879.8 489.7L881.5 488L885.5 492L883.8 493.7Z" fill="#C42A22"/><path d="M864 505.5L868 509.5L861 510.8Z" fill="#E3A868"/><path d="M861 510.8L861.6 508.6L863.2 510.2Z" fill="#333"/><rect x="865.5" y="529.2" width="13.5" height="11" fill="#E4EEF7"/><g fill="#8797A8"><rect x="867" y="531" width="10.5" height="0.9"/><rect x="867" y="533" width="10.5" height="0.9"/><rect x="867" y="535.2" width="10.5" height="0.9"/><rect x="867" y="537.2" width="5.5" height="0.9"/></g><rect x="864.3" y="536.2" width="1.3" height="4" fill="#5A6470"/><rect x="879" y="536.2" width="1.3" height="4" fill="#5A6470"/><path d="M859.9 543Q859.9 540 863 540H881Q884.1 540 884.1 543V550.9H859.9Z" fill="#1B8FE0"/><rect x="864.6" y="546.5" width="14.8" height="3.8" fill="#BFE3FA" stroke="#27323C" stroke-width="0.9"/><circle cx="878.4" cy="542.2" r="0.9" fill="#fff"/><circle cx="881.5" cy="542.2" r="0.9" fill="#60D040"/><path d="M861.7 608.6L868.3 614.8L883 600.5" fill="none" stroke="#4CA414" stroke-width="5.2"/><rect x="862.8" y="636" width="18.3" height="18.6" fill="#8292A2"/><g fill="#A8B4C0"><rect x="864.5" y="637.5" width="1.5" height="16"/><rect x="870.6" y="637.5" width="1.6" height="16"/><rect x="876.7" y="637.5" width="1.6" height="16"/></g><rect x="862" y="633" width="19.9" height="3.4" fill="#2196E8"/><path d="M868 633.2V631H876V633.2H874.5V632.3H869.5V633.2Z" fill="#2196E8"/><rect x="860.9" y="668.9" width="18" height="17.5" fill="#FFC933"/><path d="M862.5 674.5L863.5 673L864.5 674.5L865.5 673L866.5 674.5L867.5 673L868.5 674.5L869.5 673L870.5 674.5L871.5 673L872.5 674.5L874 673.5L875 675" fill="none" stroke="#6A6040" stroke-width="0.6"/><circle cx="877.4" cy="685.4" r="5.6" fill="#D43030" stroke="#FDFDFD" stroke-width="0.8"/><path d="M875 683L879.8 687.8M879.8 683L875 687.8" stroke="#fff" stroke-width="1.8"/><path d="M866.5 710L876.5 719.3L866.5 728.6" fill="none" stroke="#1E96E8" stroke-width="4.2" stroke-linejoin="miter"/><path d="M863.5 789.5L880.8 806.8M880.8 789.5L863.5 806.8" stroke="#D83A32" stroke-width="5.6"/></svg>
<div style="position:absolute;left:4px;top:823px;width:119px;height:19px;box-sizing:border-box;border:1px solid #A0A0A0;"></div>
<svg style="position:absolute;left:6px;top:824px" width="14" height="18" viewBox="0 0 14 18"><path d="M7 1.2C10.3 1.2 12.4 3.6 12.4 6.4C12.4 9 10.6 10.2 9.6 12.3L9.2 13.6H4.8L4.4 12.3C3.4 10.2 1.6 9 1.6 6.4C1.6 3.6 3.7 1.2 7 1.2Z" fill="#C838C8"/><ellipse cx="7" cy="6.8" rx="2.6" ry="1.3" fill="#F4A6F4"/><path d="M5.5 8L6.2 12.5M8.5 8L7.8 12.5" stroke="#E070E0" stroke-width="0.6"/><rect x="4.8" y="13.6" width="4.4" height="3.4" rx="0.8" fill="#8E9EAE"/></svg>
<div style="position:absolute;left:25px;transform-origin:0 0;top:825px;font:normal 13.2px/16px 'Liberation Sans';color:#000;white-space:pre;transform:scaleX(0.9091);">Hilfe und Kontakt</div>
<div style="position:absolute;left:124px;top:823px;width:32px;height:19px;box-sizing:border-box;border:1px solid #A0A0A0;"></div>
<svg style="position:absolute;left:125px;top:824px" width="18" height="18" viewBox="0 0 18 18"><ellipse cx="8.9" cy="7.9" rx="7.9" ry="7.1" fill="#F8B81C"/><path d="M9 13L14 16.8L12.6 12Z" fill="#F8B81C"/><g fill="#FFE7A8"><rect x="5" y="5.6" width="7.6" height="1.4"/><rect x="5" y="8.6" width="7.6" height="1.3"/></g></svg>
<div style="position:absolute;left:145px;transform-origin:0 0;top:825px;font:normal 13.2px/16px 'Liberation Sans';color:#000;white-space:pre;transform:scaleX(0.9091);">0</div>
<div style="position:absolute;left:158px;top:824px;width:155px;height:19px;box-sizing:border-box;background:#FFFF00;"></div>
<div style="position:absolute;left:157px;top:823px;width:155px;height:19px;box-sizing:border-box;border:1px solid #A8A8B8;"></div>
<svg style="position:absolute;left:157px;top:825px" width="18" height="17" viewBox="0 0 18 17"><rect x="4.2" y="0.8" width="12.6" height="9.8" fill="#2C8FE0"/><rect x="5.2" y="2" width="10.6" height="7.4" fill="#DDEEFC"/><rect x="6" y="3" width="6" height="1.2" fill="#fff"/><rect x="6" y="5" width="4" height="1.6" fill="#5AA8E8"/><rect x="0.8" y="6" width="12.4" height="9.8" fill="#F6B842"/><rect x="1.8" y="7" width="10.4" height="2" fill="#FCE2A8"/><rect x="1.8" y="10" width="4" height="1" fill="#FCE2A8"/><rect x="8" y="9.5" width="4.5" height="6" fill="#E8F2F8"/><circle cx="10.2" cy="11.6" r="1.3" fill="#F5A070"/><path d="M8 15.8Q10.2 12.8 12.5 15.8Z" fill="#3A8AD0"/></svg>
<div style="position:absolute;left:177px;transform-origin:0 0;top:825px;font:normal 13.2px/16px 'Liberation Sans';color:#000;white-space:pre;transform:scaleX(0.9091);">M1 Leineweber &amp; Söhne</div>
<div style="position:absolute;left:313px;top:823px;width:64px;height:19px;box-sizing:border-box;border:1px solid #A0A0A0;"></div>
<svg style="position:absolute;left:315px;top:824px" width="14" height="18" viewBox="0 0 14 18"><path d="M1 1H9.5L13 4.6V17H1Z" fill="#FFE033"/><path d="M9.5 1V4.6H13Z" fill="#E8C830"/><g fill="#B8A860"><rect x="2.5" y="3.5" width="4.5" height="0.9"/><rect x="2.5" y="6" width="3.5" height="1.4"/><rect x="2.5" y="8.5" width="9" height="0.9"/><rect x="2.5" y="10.8" width="9" height="1.4"/><rect x="2.5" y="13.5" width="9" height="0.9"/><rect x="2.5" y="15.5" width="3.5" height="0.9"/></g></svg>
<div style="position:absolute;left:333px;transform-origin:0 0;top:825px;font:normal 13.2px/16px 'Liberation Sans';color:#000;white-space:pre;transform:scaleX(0.9091);">Spicker</div>
<div style="position:absolute;left:379px;top:823px;width:596px;height:19px;box-sizing:border-box;border:1px solid #A0A0A0;"></div>
<div style="position:absolute;left:382px;transform-origin:0 0;top:826px;font:normal 12.65px/15px 'Liberation Sans';color:#9A9A9A;white-space:pre;transform:scaleX(0.9091);">V. 5.100.26.0109 - Update verfügbar -</div>
<div style="position:absolute;left:988px;top:833px;width:2px;height:2px;box-sizing:border-box;background:#A0A0A0;"></div>
<div style="position:absolute;left:984px;top:837px;width:2px;height:2px;box-sizing:border-box;background:#A0A0A0;"></div>
<div style="position:absolute;left:988px;top:837px;width:2px;height:2px;box-sizing:border-box;background:#A0A0A0;"></div>
<div style="position:absolute;left:980px;top:841px;width:2px;height:2px;box-sizing:border-box;background:#A0A0A0;"></div>
<div style="position:absolute;left:984px;top:841px;width:2px;height:2px;box-sizing:border-box;background:#A0A0A0;"></div>
<div style="position:absolute;left:988px;top:841px;width:2px;height:2px;box-sizing:border-box;background:#A0A0A0;"></div>
</body></html>
